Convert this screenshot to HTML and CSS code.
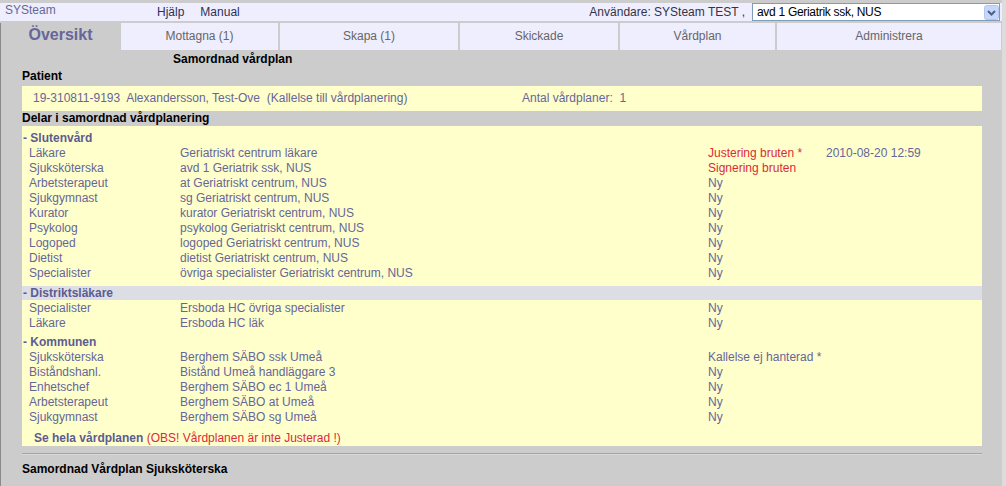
FILE: index.html
```html
<!DOCTYPE html>
<html lang="sv">
<head>
<meta charset="utf-8">
<title>SYSteam - Översikt</title>
<link rel="stylesheet" href="styles.css">
</head>
<body>
<div class="page">
  <div class="ghost"></div>
  <header class="topbar">
    <span class="brand">SYSteam</span>
    <nav class="menu"><a class="menu-link">Hjälp</a><a class="menu-link">Manual</a></nav>
    <div class="user">Användare: SYSteam TEST ,</div>
    <div class="select">
      <span class="select-text">avd 1 Geriatrik ssk, NUS</span>
      <span class="drop">
        <svg width="15" height="15" viewBox="0 0 15 15">
          <rect x="0.5" y="0.5" width="14" height="14" rx="2" fill="#c6d7fb" stroke="#b3c6ef"/>
          <path d="M4 6 L7.5 9.5 L11 6" fill="none" stroke="#4d6185" stroke-width="2"/>
        </svg>
      </span>
    </div>
  </header>
  <div class="main">
    <div class="tabs">
      <div class="tab tab-active">Översikt</div>
      <div class="tab">Mottagna (1)</div>
      <div class="tab">Skapa (1)</div>
      <div class="tab">Skickade</div>
      <div class="tab">Vårdplan</div>
      <div class="tab">Administrera</div>
    </div>
    <div class="title">Samordnad vårdplan</div>
    <div class="label label-patient">Patient</div>
    <div class="box patient">
      <span class="patient-name">19-310811-9193  Alexandersson, Test-Ove  (Kallelse till vårdplanering)</span>
      <span class="patient-count">Antal vårdplaner:  1</span>
    </div>
    <div class="label">Delar i samordnad vårdplanering</div>
    <div class="box parts">
      <div class="group">
        <div class="ghead">- Slutenvård</div>
        <div class="row"><span>Läkare</span><span>Geriatriskt centrum läkare</span><span class="red">Justering bruten *</span><span>2010-08-20 12:59</span></div>
        <div class="row"><span>Sjuksköterska</span><span>avd 1 Geriatrik ssk, NUS</span><span class="red">Signering bruten</span><span></span></div>
        <div class="row"><span>Arbetsterapeut</span><span>at Geriatriskt centrum, NUS</span><span>Ny</span><span></span></div>
        <div class="row"><span>Sjukgymnast</span><span>sg Geriatriskt centrum, NUS</span><span>Ny</span><span></span></div>
        <div class="row"><span>Kurator</span><span>kurator Geriatriskt centrum, NUS</span><span>Ny</span><span></span></div>
        <div class="row"><span>Psykolog</span><span>psykolog Geriatriskt centrum, NUS</span><span>Ny</span><span></span></div>
        <div class="row"><span>Logoped</span><span>logoped Geriatriskt centrum, NUS</span><span>Ny</span><span></span></div>
        <div class="row"><span>Dietist</span><span>dietist Geriatriskt centrum, NUS</span><span>Ny</span><span></span></div>
        <div class="row"><span>Specialister</span><span>övriga specialister Geriatriskt centrum, NUS</span><span>Ny</span><span></span></div>
      </div>
      <div class="group group-district">
        <div class="ghead ghead-band">- Distriktsläkare</div>
        <div class="row"><span>Specialister</span><span>Ersboda HC övriga specialister</span><span>Ny</span><span></span></div>
        <div class="row"><span>Läkare</span><span>Ersboda HC läk</span><span>Ny</span><span></span></div>
      </div>
      <div class="group group-kommun">
        <div class="ghead">- Kommunen</div>
        <div class="row"><span>Sjuksköterska</span><span>Berghem SÄBO ssk Umeå</span><span>Kallelse ej hanterad *</span><span></span></div>
        <div class="row"><span>Biståndshanl.</span><span>Bistånd Umeå handläggare 3</span><span>Ny</span><span></span></div>
        <div class="row"><span>Enhetschef</span><span>Berghem SÄBO ec 1 Umeå</span><span>Ny</span><span></span></div>
        <div class="row"><span>Arbetsterapeut</span><span>Berghem SÄBO at Umeå</span><span>Ny</span><span></span></div>
        <div class="row"><span>Sjukgymnast</span><span>Berghem SÄBO sg Umeå</span><span>Ny</span><span></span></div>
      </div>
      <div class="seeall"><a class="seeall-link">Se hela vårdplanen</a> <span class="red">(OBS! Vårdplanen är inte Justerad !)</span></div>
    </div>
    <div class="rule"></div>
    <div class="label label-foot">Samordnad Vårdplan Sjuksköterska</div>
  </div>
</div>
</body>
</html>
```

FILE: styles.css
```css
html, body {
  margin: 0;
  padding: 0;
}
body {
  background: #dcdcdc;
  font-family: "Liberation Sans", Arial, sans-serif;
  font-size: 12px;
  color: #000;
}
.page {
  width: 1002px;
  min-height: 486px;
  background: #cccccc;
  overflow: hidden;
}
.ghost {
  height: 3px;
}
.topbar {
  height: 18px;
  background: #eeeeff;
  display: flex;
  align-items: flex-start;
}
.brand {
  width: 152px;
  padding-left: 5px;
  line-height: 15px;
  color: #666699;
}
.menu {
  display: flex;
  gap: 16px;
  padding-top: 2px;
  line-height: 15px;
}
.menu-link {
  color: #2f2f55;
}
.user {
  margin-left: auto;
  padding-top: 2px;
  line-height: 15px;
  color: #333344;
}
.select {
  width: 248px;
  height: 18px;
  box-sizing: border-box;
  margin-left: 7px;
  margin-right: 2px;
  border: 1px solid #7f9db9;
  background: #fff;
  display: flex;
  align-items: center;
  justify-content: space-between;
}
.select-text {
  padding-left: 4px;
  color: #000;
  letter-spacing: -0.3px;
  line-height: 15px;
}
.drop {
  display: flex;
}
.main {
  box-shadow: inset 1px 0 0 #8a8a8a;
  padding-bottom: 10px;
}
.tabs {
  margin-top: 2px;
  display: grid;
  grid-template-columns: 119px 157px 178px 158px 155px 224px;
  column-gap: 2px;
  height: 27px;
}
.tab {
  background: #eeeeff;
  color: #666666;
  text-align: center;
  padding-top: 6px;
  line-height: 15px;
  box-sizing: border-box;
}
.tab-active {
  background: transparent;
  color: #666699;
  font-size: 16px;
  font-weight: bold;
  line-height: 18px;
  padding-top: 3px;
  padding-left: 2px;
}
.title {
  margin-top: 2px;
  padding-left: 173px;
  line-height: 15px;
  font-weight: bold;
}
.label {
  padding-left: 22px;
  line-height: 15px;
  font-weight: bold;
}
.label-patient {
  margin: 2px 0;
}
.box {
  margin-left: 22px;
  width: 960px;
  background: #ffffcc;
  color: #666699;
}
.patient {
  display: flex;
  padding: 5px 0 5px 11px;
  box-sizing: border-box;
  line-height: 15px;
  white-space: pre;
}
.patient-name {
  width: 489px;
}
.parts {
  padding-top: 5px;
  padding-bottom: 1px;
}
.group-district {
  margin-top: 6px;
}
.group-kommun {
  margin-top: 5px;
}
.ghead {
  height: 14px;
  line-height: 15px;
  padding-left: 1px;
  font-weight: bold;
  color: #5c5c90;
}
.ghead-band {
  background: #dddde6;
  height: 13px;
  padding-bottom: 1px;
}
.row {
  display: grid;
  grid-template-columns: 151px 528px 118px 1fr;
  padding-left: 7px;
  line-height: 16px;
  height: 15px;
  white-space: nowrap;
}
.red {
  color: #dd2a36;
}
.seeall {
  margin-top: 6px;
  padding-left: 12px;
  line-height: 16px;
  height: 15px;
}
.seeall-link {
  font-weight: bold;
  color: #5c5c90;
}
.rule {
  margin: 7px 0 0 22px;
  width: 960px;
  border-top: 1px solid #a8a498;
  border-bottom: 1px solid #dadada;
}
.label-foot {
  margin-top: 7px;
}
```
